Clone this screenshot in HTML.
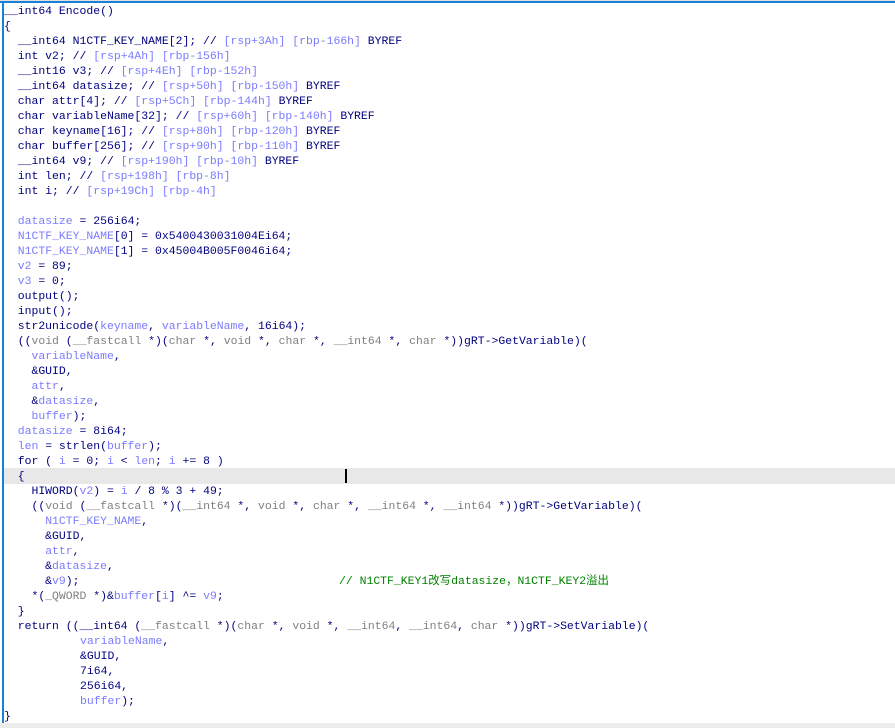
<!DOCTYPE html>
<html><head><meta charset="utf-8"><style>
body{margin:0;width:895px;height:728px;background:#fff;overflow:hidden;position:relative;font-family:"Liberation Mono","Noto Sans CJK SC",monospace;font-size:11.45px;color:#000080}
#top{position:absolute;left:0;top:0;width:895px;height:1px;background:#e0e0e0}
#bl{position:absolute;left:0;top:1px;width:895px;height:2px;background:#1a7fd6}
#lb{position:absolute;left:2px;top:1px;width:2px;height:722px;background:#1a7fd6}
#bot{position:absolute;left:0;top:723px;width:895px;height:5px;background:#ececec}
#hl{position:absolute;left:4px;top:468px;width:891px;height:16px;background:#e8e8e8}
#cur{position:absolute;left:345px;top:469px;width:1.5px;height:14px;background:#000}
#code{position:absolute;left:4px;top:4px}
.l{height:15px;line-height:15px;white-space:pre;position:relative}
.v{color:#7b7bff}.g{color:#808080}.c{color:#008000}
.cm{position:absolute;left:335px;top:0}
.r{padding-left:76px}
</style></head><body>
<div id="top"></div><div id="bl"></div><div id="bot"></div><div id="hl"></div><div id="cur"></div><div id="lb"></div>
<div id="code">
<div class="l">__int64 Encode()</div>
<div class="l">{</div>
<div class="l">  __int64 N1CTF_KEY_NAME[2]; // <span class="v">[rsp+3Ah] [rbp-166h]</span> BYREF</div>
<div class="l">  int v2; // <span class="v">[rsp+4Ah] [rbp-156h]</span></div>
<div class="l">  __int16 v3; // <span class="v">[rsp+4Eh] [rbp-152h]</span></div>
<div class="l">  __int64 datasize; // <span class="v">[rsp+50h] [rbp-150h]</span> BYREF</div>
<div class="l">  char attr[4]; // <span class="v">[rsp+5Ch] [rbp-144h]</span> BYREF</div>
<div class="l">  char variableName[32]; // <span class="v">[rsp+60h] [rbp-140h]</span> BYREF</div>
<div class="l">  char keyname[16]; // <span class="v">[rsp+80h] [rbp-120h]</span> BYREF</div>
<div class="l">  char buffer[256]; // <span class="v">[rsp+90h] [rbp-110h]</span> BYREF</div>
<div class="l">  __int64 v9; // <span class="v">[rsp+190h] [rbp-10h]</span> BYREF</div>
<div class="l">  int len; // <span class="v">[rsp+198h] [rbp-8h]</span></div>
<div class="l">  int i; // <span class="v">[rsp+19Ch] [rbp-4h]</span></div>
<div class="l"> </div>
<div class="l">  <span class="v">datasize</span> = 256i64;</div>
<div class="l">  <span class="v">N1CTF_KEY_NAME</span>[0] = 0x5400430031004Ei64;</div>
<div class="l">  <span class="v">N1CTF_KEY_NAME</span>[1] = 0x45004B005F0046i64;</div>
<div class="l">  <span class="v">v2</span> = 89;</div>
<div class="l">  <span class="v">v3</span> = 0;</div>
<div class="l">  output();</div>
<div class="l">  input();</div>
<div class="l">  str2unicode(<span class="v">keyname</span>, <span class="v">variableName</span>, 16i64);</div>
<div class="l">  ((<span class="g">void</span> (<span class="g">__fastcall</span> *)(<span class="g">char</span> *, <span class="g">void</span> *, <span class="g">char</span> *, <span class="g">__int64</span> *, <span class="g">char</span> *))gRT-&gt;GetVariable)(</div>
<div class="l">    <span class="v">variableName</span>,</div>
<div class="l">    &amp;GUID,</div>
<div class="l">    <span class="v">attr</span>,</div>
<div class="l">    &amp;<span class="v">datasize</span>,</div>
<div class="l">    <span class="v">buffer</span>);</div>
<div class="l">  <span class="v">datasize</span> = 8i64;</div>
<div class="l">  <span class="v">len</span> = strlen(<span class="v">buffer</span>);</div>
<div class="l">  for ( <span class="v">i</span> = 0; <span class="v">i</span> &lt; <span class="v">len</span>; <span class="v">i</span> += 8 )</div>
<div class="l">  {</div>
<div class="l">    HIWORD(<span class="v">v2</span>) = <span class="v">i</span> / 8 % 3 + 49;</div>
<div class="l">    ((<span class="g">void</span> (<span class="g">__fastcall</span> *)(<span class="g">__int64</span> *, <span class="g">void</span> *, <span class="g">char</span> *, <span class="g">__int64</span> *, <span class="g">__int64</span> *))gRT-&gt;GetVariable)(</div>
<div class="l">      <span class="v">N1CTF_KEY_NAME</span>,</div>
<div class="l">      &amp;GUID,</div>
<div class="l">      <span class="v">attr</span>,</div>
<div class="l">      &amp;<span class="v">datasize</span>,</div>
<div class="l">      &amp;<span class="v">v9</span>);<span class="cm c">// N1CTF_KEY1改写datasize，N1CTF_KEY2溢出</span></div>
<div class="l">    *(<span class="g">_QWORD</span> *)&amp;<span class="v">buffer</span>[<span class="v">i</span>] ^= <span class="v">v9</span>;</div>
<div class="l">  }</div>
<div class="l">  return ((__int64 (<span class="g">__fastcall</span> *)(<span class="g">char</span> *, <span class="g">void</span> *, <span class="g">__int64</span>, <span class="g">__int64</span>, <span class="g">char</span> *))gRT-&gt;SetVariable)(</div>
<div class="l r"><span class="v">variableName</span>,</div>
<div class="l r">&amp;GUID,</div>
<div class="l r">7i64,</div>
<div class="l r">256i64,</div>
<div class="l r"><span class="v">buffer</span>);</div>
<div class="l">}</div>
</div>
</body></html>
